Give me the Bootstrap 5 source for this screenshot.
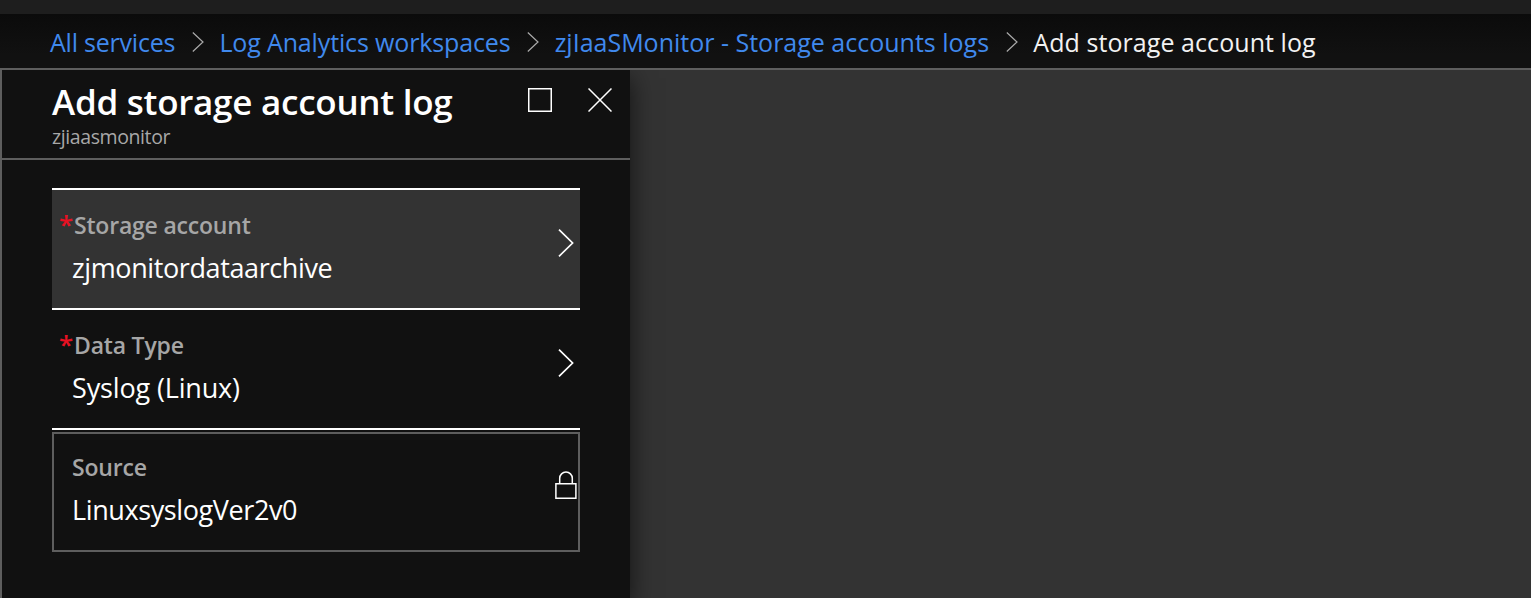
<!DOCTYPE html>
<html lang="en">
<head>
<meta charset="utf-8">
<meta name="viewport" content="width=device-width, initial-scale=1">
<title>Add storage account log</title>
<link href="https://cdn.jsdelivr.net/npm/bootstrap@5.3.0/dist/css/bootstrap.min.css" rel="stylesheet">
<style>
  body { font-family: "Open Sans", "Noto Sans", sans-serif; background: #333; color: #fff; height: 598px; overflow: hidden; }
  .topbar { height: 14px; background: #1e1e1e; }
  .crumbs { height: 56px; padding: 2px 0 0 50px; font-size: 25px; line-height: 54px; background: linear-gradient(#0b0b0b, #111 75%); border-bottom: 2px solid #5e5e5e; white-space: nowrap; }
  .crumbs a { color: #4089ed; }
  .crumbs svg { margin: 0 15.5px 0 16.7px; stroke: #aaa; stroke-width: 1.2; }
  .crumbs .current { color: #f2f2f2; letter-spacing: .07px; }
  .c1 { letter-spacing: -.22px; }
  .c2 { letter-spacing: -.14px; }
  .c3 { letter-spacing: 0; }
  .blade { width: 630px; background: #111; border-left: 2px solid #5e5e5e; box-shadow: 0 8px 24px rgba(0,0,0,.65); clip-path: inset(0 -60px 0 0); }
  .blade-head { height: 90px; border-bottom: 2px solid #5e5e5e; padding: 8px 18px 0 50px; }
  .blade-title { font-size: 35px; line-height: 48px; font-weight: 600; letter-spacing: -.26px; }
  .blade-sub { font-size: 19.5px; line-height: 22px; color: #a8a8a8; letter-spacing: -.4px; }
  .blade-tools { gap: 36px; padding-top: 10px; }
  .blade-body { padding: 28px 50px 0; }
  .picker { height: 120px; border-bottom: 2px solid #fff; padding: 18px 5px 0 20px; }
  .picker.chosen { height: 122px; border-top: 2px solid #fff; background: #333; }
  .picker.locked { margin-top: 2px; border: 2px solid #5e5e5e; padding: 16px 1px 0 18px; }
  .picker > svg { margin-top: 17px; }
  .caption { font-size: 23px; line-height: 34px; font-weight: 600; color: #a6a6a6; letter-spacing: -.2px; white-space: nowrap; }
  .caption .req { color: #e81123; margin-left: -13px; display: inline-block; width: 15px; font-size: 26px; line-height: 20px; letter-spacing: 0; }
  .setting { font-size: 27px; line-height: 34px; margin-top: 9px; white-space: nowrap; letter-spacing: -.39px; }
  .v2 { letter-spacing: -.15px; }
  svg { display: block; flex: none; fill: none; stroke: #fff; }
</style>
</head>
<body class="d-flex flex-column">
<div class="topbar flex-shrink-0"></div>
<nav class="crumbs d-flex align-items-center flex-shrink-0" aria-label="breadcrumb">
  <a href="#" class="text-decoration-none c1">All services</a>
  <svg width="12" height="20" viewBox="0 0 12 20"><path d="M.8.5 11 10 .8 19.5"/></svg>
  <a href="#" class="text-decoration-none c2">Log Analytics workspaces</a>
  <svg width="12" height="20" viewBox="0 0 12 20"><path d="M.8.5 11 10 .8 19.5"/></svg>
  <a href="#" class="text-decoration-none c3">zjIaaSMonitor - Storage accounts logs</a>
  <svg width="12" height="20" viewBox="0 0 12 20"><path d="M.8.5 11 10 .8 19.5"/></svg>
  <span class="current">Add storage account log</span>
</nav>
<main class="blade flex-grow-1">
  <header class="blade-head d-flex justify-content-between">
    <div>
      <h1 class="blade-title m-0">Add storage account log</h1>
      <div class="blade-sub">zjiaasmonitor</div>
    </div>
    <div class="blade-tools d-flex align-items-start">
      <svg width="24" height="24" viewBox="0 0 24 24"><path d="M.75.75h22.5v22.5H.75z" stroke-width="1.5"/></svg>
      <svg width="24" height="24" viewBox="0 0 24 24"><path d="m.5.5 23 23m0-23-23 23" stroke-width="1.5"/></svg>
    </div>
  </header>
  <div class="blade-body">
    <div class="picker chosen d-flex justify-content-between">
      <div>
        <div class="caption"><span class="req">*</span>Storage account</div>
        <div class="setting">zjmonitordataarchive</div>
      </div>
      <svg width="18" height="36" viewBox="0 0 18 36"><path d="m2 4.7 13.6 13.3L2 31.3" stroke-width="1.7"/></svg>
    </div>
    <div class="picker d-flex justify-content-between">
      <div>
        <div class="caption"><span class="req">*</span>Data Type</div>
        <div class="setting v2">Syslog (Linux)</div>
      </div>
      <svg width="18" height="36" viewBox="0 0 18 36"><path d="m2 4.7 13.6 13.3L2 31.3" stroke-width="1.7"/></svg>
    </div>
    <div class="picker locked d-flex justify-content-between">
      <div>
        <div class="caption">Source</div>
        <div class="setting">LinuxsyslogVer2v0</div>
      </div>
      <svg width="22" height="36" viewBox="0 0 22 36"><path d="M.9 16.8h20v14.4h-20zM4.7 16.8v-5.5a6.3 6.3 0 0 1 12.6 0v5.5" stroke-width="1.5"/></svg>
    </div>
  </div>
</main>
<script src="https://cdn.jsdelivr.net/npm/bootstrap@5.3.0/dist/js/bootstrap.bundle.min.js"></script>
</body>
</html>
